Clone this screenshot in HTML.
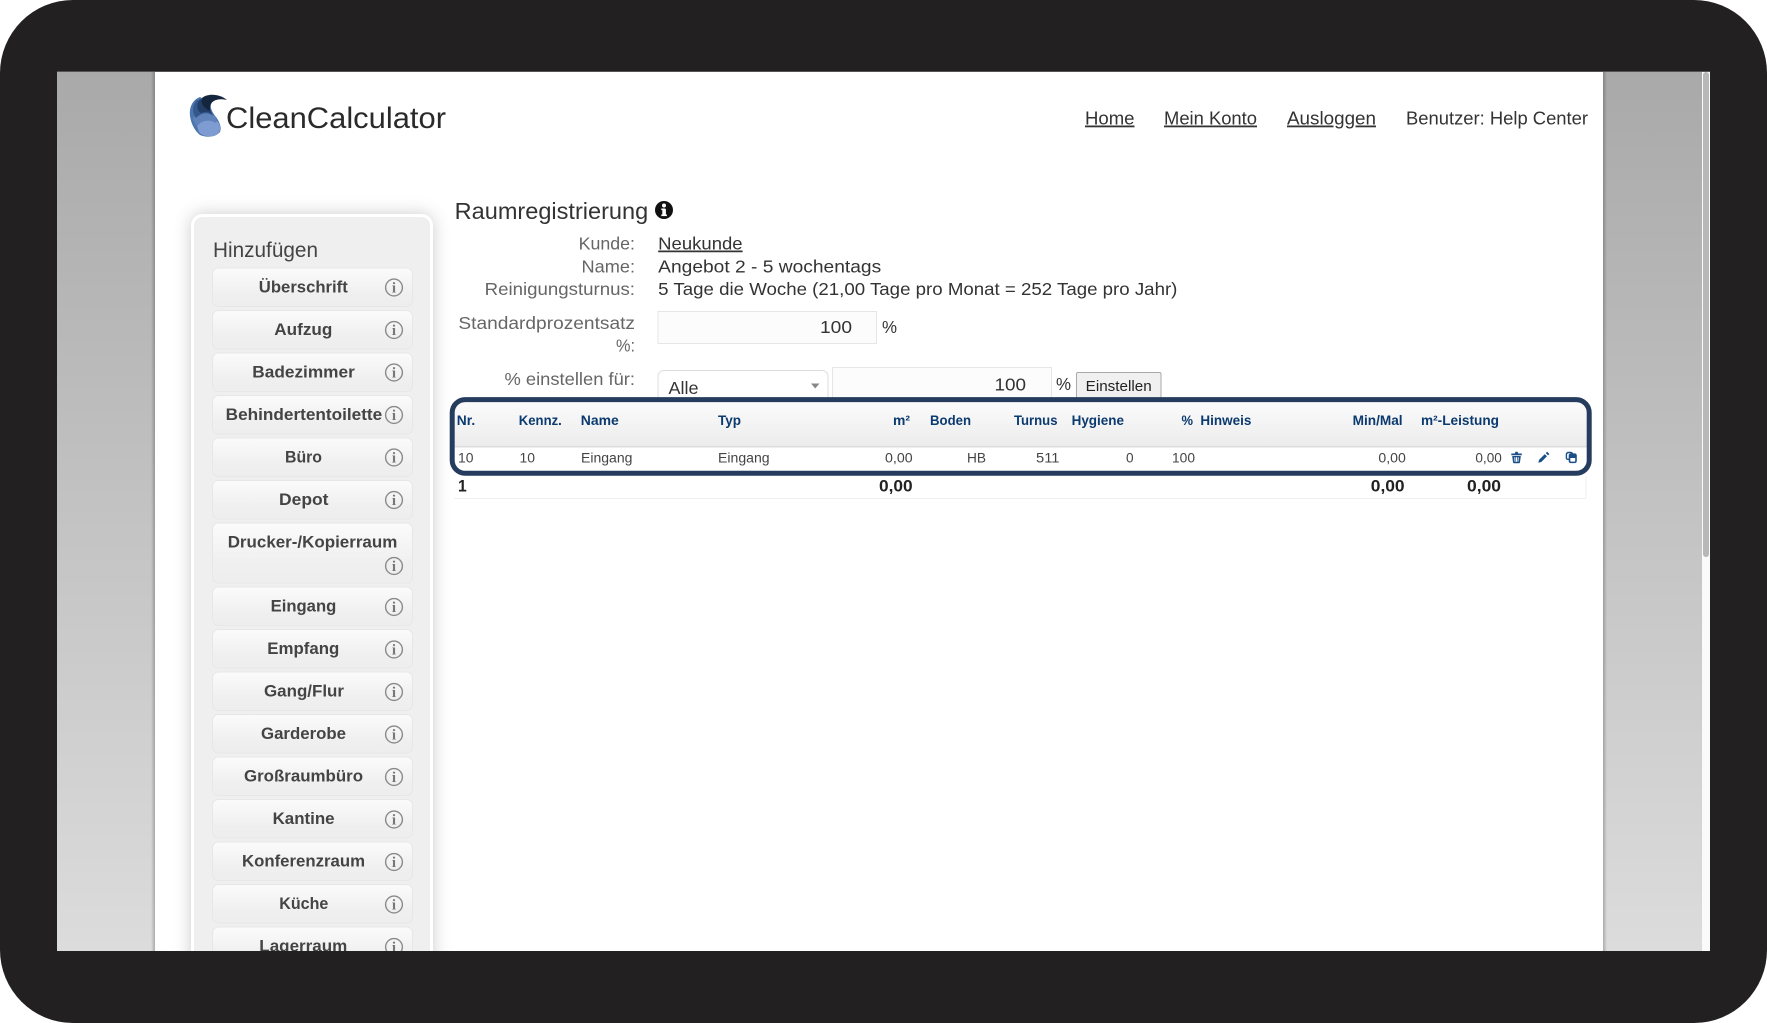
<!DOCTYPE html>
<html lang="de"><head><meta charset="utf-8"><title>CleanCalculator</title>
<style>
html,body{margin:0;padding:0;background:#fff;width:1767px;height:1023px;overflow:hidden}
svg{display:block}
text{font-family:"Liberation Sans",sans-serif;white-space:pre}
.n{font-size:18px;fill:#333}
.l{font-size:17.5px;fill:#666}
.v{font-size:17.5px;fill:#333}
.b{font-size:17px;font-weight:bold;fill:#444}
.h{font-size:13.5px;font-weight:bold;fill:#0b3a70}
.d{font-size:13.5px;fill:#444}
.t{font-size:17px;font-weight:bold;fill:#222}
.ii{font-family:"Liberation Serif",serif;font-size:15px;fill:#777;font-weight:bold}
</style></head><body>
<svg width="1767" height="1023" viewBox="0 0 1767 1023" xmlns="http://www.w3.org/2000/svg">
<defs>
<linearGradient id="bg" x1="0" y1="0" x2="0" y2="1"><stop offset="0" stop-color="#a9a9a9"/><stop offset="1" stop-color="#dcdcdc"/></linearGradient>
<linearGradient id="btn" x1="0" y1="0" x2="0" y2="1"><stop offset="0" stop-color="#fbfbfb"/><stop offset=".7" stop-color="#efefef"/><stop offset="1" stop-color="#eeeeee"/></linearGradient>
<linearGradient id="th" x1="0" y1="0" x2="0" y2="1"><stop offset="0" stop-color="#fbfbfb"/><stop offset="1" stop-color="#ececec"/></linearGradient>
<linearGradient id="ps" x1="0" y1="0" x2="1" y2="0"><stop offset="0" stop-color="#000" stop-opacity="0"/><stop offset="1" stop-color="#000" stop-opacity=".22"/></linearGradient>
<filter id="sh" x="-20%" y="-10%" width="140%" height="120%"><feGaussianBlur stdDeviation="9"/></filter>
<g id="i"><circle cx="0" cy="0" r="8.4" fill="none" stroke="#8a8a8a" stroke-width="1.4"/><text class="ii" x="0" y="5.2" text-anchor="middle">i</text></g>
<clipPath id="sc"><rect x="57" y="72" width="1653" height="879"/></clipPath>
</defs>

<rect x="0" y="0" width="1767" height="1023" rx="73" ry="73" fill="#222021"/>
<rect x="57" y="71" width="1653" height="1" fill="#555"/>

<g clip-path="url(#sc)">
<rect x="57" y="72" width="1645" height="879" fill="url(#bg)"/>
<rect x="1702" y="72" width="8" height="879" fill="#fafafa"/>
<rect x="1703" y="72" width="6" height="485" rx="3" fill="#b8b8b8"/>
<rect x="151" y="72" width="4" height="879" fill="url(#ps)"/>
<rect x="1603" y="72" width="4" height="879" fill="url(#ps)" transform="matrix(-1 0 0 1 3210 0)"/>
<rect x="155" y="72" width="1448" height="879" fill="#fff"/>

<!-- logo -->
<path d="M200 97C192 100 189 108 190 116C191 124 195 131 200 135C207 138 216 137 220 132C222 127 219 121 216 117C212 112 210 108 211 103Z" fill="#4c74ad"/>
<path d="M197 126C203 119 213 118 218 122C222 128 220 134 214 136C208 137 202 136 199 132Z" fill="#7f9cd2"/>
<path d="M193 118C198 111 208 111 214 115C217 118 217 121 216 123C209 119 202 120 197 126C195 124 193 121 193 118Z" fill="#5f82ba"/>
<path d="M197 100C192 105 192 113 196 118C202 112 208 112 214 116C211 112 209 108 210 104Z" fill="#35578c"/>
<path d="M200 99C196 104 197 111 201 113C206 111 209 112 212 114C210 110 209 107 210 103Z" fill="#233e66"/>
<path d="M202 98C208 93 220 94 227 100C219 98 213 100 211 104C209.500 107 210 109 210.500 111C205 109 200 104 202 98Z" fill="#14263e"/>
<text x="226" y="128" font-size="30" fill="#2a2a2a" textLength="220" lengthAdjust="spacingAndGlyphs">CleanCalculator</text>

<!-- nav -->
<text class="n" x="1085" y="124.500" textLength="49.500" lengthAdjust="spacingAndGlyphs" text-decoration="underline">Home</text>
<text class="n" x="1164" y="124.500" textLength="93" lengthAdjust="spacingAndGlyphs" text-decoration="underline">Mein Konto</text>
<text class="n" x="1287" y="124.500" textLength="89" lengthAdjust="spacingAndGlyphs" text-decoration="underline">Ausloggen</text>
<text class="n" x="1406" y="124.500" textLength="182" lengthAdjust="spacingAndGlyphs">Benutzer: Help Center</text>

<!-- sidebar -->
<rect x="191" y="214" width="242" height="800" rx="11" fill="#000" opacity=".2" filter="url(#sh)"/>
<rect x="192.500" y="215.500" width="239" height="800" rx="10" fill="#efefef" stroke="#fff" stroke-width="3"/>
<text x="213" y="257" font-size="21" fill="#444" textLength="105" lengthAdjust="spacingAndGlyphs">Hinzufügen</text>

<g fill="url(#btn)" stroke="#e7e7e7" stroke-width="1">
<rect x="212.500" y="268" width="200" height="38.500" rx="6"/>
<rect x="212.500" y="310.500" width="200" height="38.500" rx="6"/>
<rect x="212.500" y="353" width="200" height="38.500" rx="6"/>
<rect x="212.500" y="395.500" width="200" height="38.500" rx="6"/>
<rect x="212.500" y="438" width="200" height="38.500" rx="6"/>
<rect x="212.500" y="480.500" width="200" height="38.500" rx="6"/>
<rect x="212.500" y="523" width="200" height="60" rx="6"/>
<rect x="212.500" y="587" width="200" height="38.500" rx="6"/>
<rect x="212.500" y="629.500" width="200" height="38.500" rx="6"/>
<rect x="212.500" y="672" width="200" height="38.500" rx="6"/>
<rect x="212.500" y="714.500" width="200" height="38.500" rx="6"/>
<rect x="212.500" y="757" width="200" height="38.500" rx="6"/>
<rect x="212.500" y="799.500" width="200" height="38.500" rx="6"/>
<rect x="212.500" y="842" width="200" height="38.500" rx="6"/>
<rect x="212.500" y="884.500" width="200" height="38.500" rx="6"/>
<rect x="212.500" y="927" width="200" height="38.500" rx="6"/>
</g>

<text class="b" x="258.800" y="292.500" textLength="89" lengthAdjust="spacingAndGlyphs">Überschrift</text>
<text class="b" x="274.300" y="335" textLength="58" lengthAdjust="spacingAndGlyphs">Aufzug</text>
<text class="b" x="252.300" y="377.500" textLength="102.500" lengthAdjust="spacingAndGlyphs">Badezimmer</text>
<text class="b" x="225.700" y="420" textLength="156.500" lengthAdjust="spacingAndGlyphs">Behindertentoilette</text>
<text class="b" x="285" y="462.500" textLength="37" lengthAdjust="spacingAndGlyphs">Büro</text>
<text class="b" x="279" y="505" textLength="49.500" lengthAdjust="spacingAndGlyphs">Depot</text>
<text class="b" x="227.700" y="547.500" textLength="169.600" lengthAdjust="spacingAndGlyphs">Drucker-/Kopierraum</text>
<text class="b" x="270.600" y="611.700" textLength="65.700" lengthAdjust="spacingAndGlyphs">Eingang</text>
<text class="b" x="267.300" y="654" textLength="72" lengthAdjust="spacingAndGlyphs">Empfang</text>
<text class="b" x="264" y="696.500" textLength="80" lengthAdjust="spacingAndGlyphs">Gang/Flur</text>
<text class="b" x="261" y="739" textLength="85" lengthAdjust="spacingAndGlyphs">Garderobe</text>
<text class="b" x="244" y="781.500" textLength="119" lengthAdjust="spacingAndGlyphs">Großraumbüro</text>
<text class="b" x="272.600" y="824" textLength="62" lengthAdjust="spacingAndGlyphs">Kantine</text>
<text class="b" x="242" y="866.500" textLength="123" lengthAdjust="spacingAndGlyphs">Konferenzraum</text>
<text class="b" x="279.300" y="909" textLength="49" lengthAdjust="spacingAndGlyphs">Küche</text>
<text class="b" x="259.300" y="951.500" textLength="88" lengthAdjust="spacingAndGlyphs">Lagerraum</text>

<use href="#i" x="394" y="287.500"/>
<use href="#i" x="394" y="330"/>
<use href="#i" x="394" y="372.500"/>
<use href="#i" x="394" y="415"/>
<use href="#i" x="394" y="457.500"/>
<use href="#i" x="394" y="500"/>
<use href="#i" x="394" y="566"/>
<use href="#i" x="394" y="607"/>
<use href="#i" x="394" y="649.500"/>
<use href="#i" x="394" y="692"/>
<use href="#i" x="394" y="734.500"/>
<use href="#i" x="394" y="777"/>
<use href="#i" x="394" y="819.500"/>
<use href="#i" x="394" y="862"/>
<use href="#i" x="394" y="904.500"/>
<use href="#i" x="394" y="947"/>

<!-- heading -->
<text x="454.700" y="219" font-size="23" fill="#333" textLength="193.500" lengthAdjust="spacingAndGlyphs">Raumregistrierung</text>
<circle cx="664" cy="210" r="9" fill="#111"/>
<rect x="662.300" y="209" width="3.600" height="6.500" fill="#fff"/>
<rect x="661.300" y="208.500" width="4" height="1.600" fill="#fff"/>
<rect x="661.300" y="214.500" width="5.600" height="1.600" fill="#fff"/>
<circle cx="664" cy="205.500" r="2" fill="#fff"/>

<!-- info -->
<text class="l" x="578.600" y="249.500" textLength="56.400" lengthAdjust="spacingAndGlyphs">Kunde:</text>
<text class="l" x="581.500" y="272.500" textLength="53.500" lengthAdjust="spacingAndGlyphs">Name:</text>
<text class="l" x="484.600" y="295" textLength="150.400" lengthAdjust="spacingAndGlyphs">Reinigungsturnus:</text>
<text class="v" x="658.200" y="249.500" textLength="84.400" lengthAdjust="spacingAndGlyphs" text-decoration="underline">Neukunde</text>
<text class="v" x="658.200" y="272.500" textLength="223" lengthAdjust="spacingAndGlyphs">Angebot 2 - 5 wochentags</text>
<text class="v" x="658.200" y="295" textLength="519.200" lengthAdjust="spacingAndGlyphs">5 Tage die Woche (21,00 Tage pro Monat = 252 Tage pro Jahr)</text>

<text class="l" x="458.400" y="329" textLength="176.600" lengthAdjust="spacingAndGlyphs">Standardprozentsatz</text>
<text class="l" x="616" y="351.700" textLength="19" lengthAdjust="spacingAndGlyphs">%:</text>
<rect x="658" y="311.500" width="218.500" height="32" fill="#fcfcfc" stroke="#e6e6e6"/>
<text class="v" x="820" y="333" textLength="32" lengthAdjust="spacingAndGlyphs" fill="#222">100</text>
<text class="v" x="882" y="333" textLength="15" lengthAdjust="spacingAndGlyphs">%</text>

<text class="l" x="504.500" y="385" textLength="130.500" lengthAdjust="spacingAndGlyphs">% einstellen für:</text>
<rect x="658" y="370.500" width="170" height="40" rx="6" fill="#fff" stroke="#ddd"/>
<text class="v" x="668.500" y="394" textLength="30" lengthAdjust="spacingAndGlyphs">Alle</text>
<path d="M811 383.500H819.500L815.200 388.500Z" fill="#888"/>
<rect x="832.500" y="367.500" width="219" height="40" fill="#fcfcfc" stroke="#e6e6e6"/>
<text class="v" x="994.500" y="390.500" textLength="31.500" lengthAdjust="spacingAndGlyphs">100</text>
<text class="v" x="1056" y="390" textLength="15" lengthAdjust="spacingAndGlyphs">%</text>
<rect x="1076.500" y="372.500" width="84.500" height="27" rx="1.500" fill="#f0f0f0" stroke="#aaa"/>
<text x="1085.700" y="391" font-size="15" fill="#222" textLength="66" lengthAdjust="spacingAndGlyphs">Einstellen</text>

<!-- table -->
<rect x="454" y="402" width="1133" height="44" fill="url(#th)"/>
<rect x="454" y="446" width="1133" height="1.500" fill="#dcdcdc"/>
<rect x="454" y="447.500" width="1133" height="24" fill="#fff"/>

<text class="h" x="456.800" y="425" textLength="18.400" lengthAdjust="spacingAndGlyphs">Nr.</text>
<text class="h" x="518.800" y="425" textLength="43" lengthAdjust="spacingAndGlyphs">Kennz.</text>
<text class="h" x="580.800" y="425" textLength="38" lengthAdjust="spacingAndGlyphs">Name</text>
<text class="h" x="718" y="425" textLength="23" lengthAdjust="spacingAndGlyphs">Typ</text>
<text class="h" x="893" y="425" textLength="17" lengthAdjust="spacingAndGlyphs">m²</text>
<text class="h" x="930" y="425" textLength="41" lengthAdjust="spacingAndGlyphs">Boden</text>
<text class="h" x="1014" y="425" textLength="43.500" lengthAdjust="spacingAndGlyphs">Turnus</text>
<text class="h" x="1071.600" y="425" textLength="52.400" lengthAdjust="spacingAndGlyphs">Hygiene</text>
<text class="h" x="1181.500" y="425" textLength="11.500" lengthAdjust="spacingAndGlyphs">%</text>
<text class="h" x="1200.400" y="425" textLength="51" lengthAdjust="spacingAndGlyphs">Hinweis</text>
<text class="h" x="1352.600" y="425" textLength="50" lengthAdjust="spacingAndGlyphs">Min/Mal</text>
<text class="h" x="1421" y="425" textLength="78" lengthAdjust="spacingAndGlyphs">m²-Leistung</text>

<text class="d" x="458" y="462.500" textLength="15.500" lengthAdjust="spacingAndGlyphs">10</text>
<text class="d" x="519.500" y="462.500" textLength="15.500" lengthAdjust="spacingAndGlyphs">10</text>
<text class="d" x="581" y="462.500" textLength="51.400" lengthAdjust="spacingAndGlyphs">Eingang</text>
<text class="d" x="718" y="462.500" textLength="51.600" lengthAdjust="spacingAndGlyphs">Eingang</text>
<text class="d" x="885" y="462.500" textLength="27.600" lengthAdjust="spacingAndGlyphs">0,00</text>
<text class="d" x="967" y="462.500" textLength="19" lengthAdjust="spacingAndGlyphs">HB</text>
<text class="d" x="1036" y="462.500" textLength="23.500" lengthAdjust="spacingAndGlyphs">511</text>
<text class="d" x="1126" y="462.500" textLength="7.600" lengthAdjust="spacingAndGlyphs">0</text>
<text class="d" x="1172" y="462.500" textLength="23" lengthAdjust="spacingAndGlyphs">100</text>
<text class="d" x="1378.400" y="462.500" textLength="27.400" lengthAdjust="spacingAndGlyphs">0,00</text>
<text class="d" x="1475.400" y="462.500" textLength="26.400" lengthAdjust="spacingAndGlyphs">0,00</text>

<!-- icons -->
<g fill="#1a4f88">
<path fill-rule="evenodd" d="M1511.300 453.500H1514.800L1515.500 451.800H1517.600L1518.300 453.500H1521.800V455.200H1511.300ZM1512.200 456H1520.800L1520 462.300C1520 462.800 1519.500 463.200 1519 463.200H1514C1513.500 463.200 1513 462.800 1513 462.300ZM1514.300 457.200L1514.600 461.800H1515.500L1515.300 457.200ZM1516 457.200V461.800H1517V457.200ZM1517.800 457.200L1517.500 461.800H1518.400L1518.700 457.200Z"/>
<path d="M1538.300 462.800L1539.100 459.800L1544.800 454.100L1547 456.300L1541.300 462ZM1545.800 453L1547.200 451.800L1549.400 454L1548 455.400Z"/>
<path fill-rule="evenodd" d="M1568.500 451.800H1570.800C1572 451.800 1572.800 452.500 1573 453.400H1574.800C1575.900 453.400 1576.800 454.300 1576.800 455.400V461C1576.800 462.200 1575.900 463.100 1574.800 463.100H1570.700C1569.500 463.100 1568.700 462.200 1568.700 461V460H1567.800C1566.600 460 1565.700 459.100 1565.700 457.900V454.600C1565.700 453 1566.900 451.800 1568.500 451.800ZM1568.500 453.200C1567.700 453.200 1567.100 453.800 1567.100 454.600V457.900C1567.100 458.300 1567.400 458.600 1567.800 458.600H1568.700V455.400C1568.700 454.300 1569.600 453.400 1570.700 453.400H1571.600C1571.400 453.300 1571.100 453.200 1570.800 453.200ZM1570.300 458V461C1570.300 461.300 1570.500 461.600 1570.800 461.600H1574.700C1575 461.600 1575.200 461.300 1575.200 461V458Z"/>
</g>

<!-- frame -->
<rect x="452.200" y="399.600" width="1137" height="73.700" rx="13" fill="none" stroke="#253c5f" stroke-width="5"/>

<!-- total -->
<rect x="454" y="498" width="1132" height="1" fill="#efefef"/>
<rect x="1585.500" y="476" width="1" height="22" fill="#efefef"/>
<text class="t" x="458" y="491.700" textLength="8.700" lengthAdjust="spacingAndGlyphs">1</text>
<text class="t" x="879" y="491.700" textLength="33.600" lengthAdjust="spacingAndGlyphs">0,00</text>
<text class="t" x="1370.800" y="491.700" textLength="33.800" lengthAdjust="spacingAndGlyphs">0,00</text>
<text class="t" x="1467" y="491.700" textLength="34" lengthAdjust="spacingAndGlyphs">0,00</text>
</g>
</svg>
</body></html>
